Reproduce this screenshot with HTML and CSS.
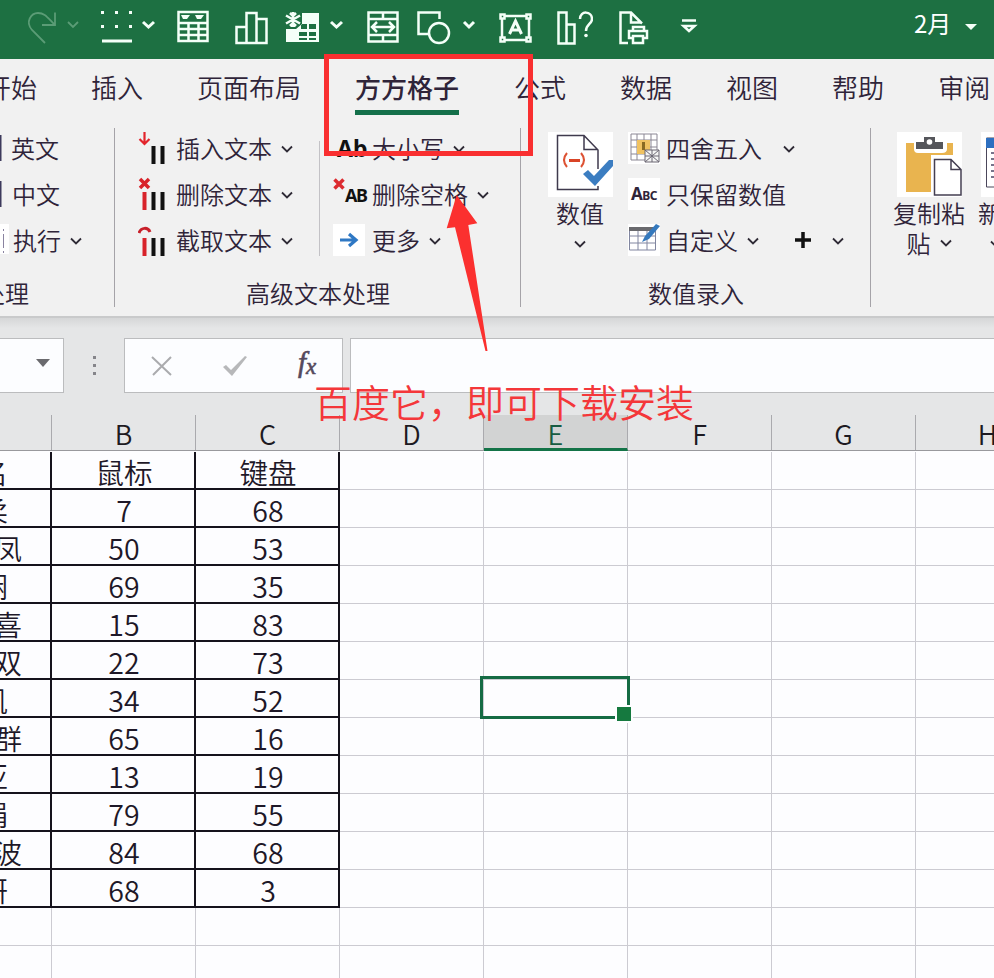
FILE: index.html
```html
<!DOCTYPE html>
<html lang="zh-CN">
<head>
  <meta charset="UTF-8">
  <meta name="viewport" content="width=device-width, initial-scale=1.0">
  <title>2月</title>
  <link rel="stylesheet" href="styles.css">
</head>
<body>
  <svg class="defs">
    <symbol id="chev" viewBox="0 0 12 8"><path d="M1 1.5l5 5 5-5" fill="none" stroke="currentColor" stroke-width="1.8"/></symbol>
  </svg>

  <header class="titlebar">
    <!-- redo -->
    <svg class="dim" width="36" height="40"><path d="M21 35L8 22C1 14 7 5 14 5C21 5 23 9 31 17M31 4.500V17H18"/></svg>
    <svg class="dim" width="16" height="34"><path d="M3 14l5 5 5-5"/></svg>
    <!-- border -->
    <svg width="36" height="40"><path class="solid" d="M3 3h3v3H3zM17 3h3v3h-3zM31 3h3v3h-3zM3 17h3v3H3zM17 17h3v3h-3zM31 17h3v3h-3zM4 31.500h30v3H4z"/></svg>
    <svg width="18" height="34"><path class="bold" d="M3 14l5.500 5 5.500-5"/></svg>
    <!-- table -->
    <svg width="36" height="40"><path d="M3.500 4h29v29h-29zM3.500 15h29M3.500 21h29M3.500 27h29M13.500 15v18M23.500 15v18"/><path class="solid" d="M6 7h9l-3 4h-4zM20 7h9l-3 4h-4z"/></svg>
    <!-- chart -->
    <svg width="38" height="40"><path d="M3.500 19h10v16h-10zM13.500 5h10v30h-10zM23.500 11h10v24h-10z"/></svg>
    <!-- freeze panes -->
    <svg width="38" height="40"><path class="solid" fill-rule="evenodd" d="M19 5h17v29H3V21h10l6-5zM18 16v5h6v-5zM26 16v5h7v-5zM16 24v4h8v-4zM26 24v4h7v-4zM26 30v2h7v-2zM16 30v2h8v-2z"/><path d="M10 4v15M3 7.500l14 8M3 15.500l14-8M7 5l3 3 3-3M7 18l3-3 3 3"/></svg>
    <svg width="18" height="34"><path class="bold" d="M3 14l5.500 5 5.500-5"/></svg>
    <!-- merge -->
    <svg width="36" height="40"><path d="M3.500 4.500h29v29h-29zM3.500 11h29M3.500 27h29M18 4.500v6.500M18 27v6.500M7 19h22M12 14l-5 5 5 5M24 14l5 5-5 5"/></svg>
    <!-- shapes -->
    <svg width="38" height="40"><path d="M13 26H3.500V4.500H24.500V11"/><circle cx="24" cy="25" r="10"/></svg>
    <svg width="18" height="34"><path class="bold" d="M3 14l5 5 5-5"/></svg>
    <!-- text box -->
    <svg width="36" height="40"><path d="M5 8h27v24H5z"/><path class="knock" d="M3.500 6.500h4v4h-4zM29.500 6.500h4v4h-4zM3.500 29.500h4v4h-4zM29.500 29.500h4v4h-4z"/><path class="bold" d="M12.500 26l6-13 6 13M15 22h8"/></svg>
    <!-- chart help -->
    <svg width="38" height="40"><path d="M3.500 4.500h8v31h-8zM11.500 16.500h8v19h-8z"/><path d="M25 11c0-9 12-8 12 0c0 5-6 5-6 12"/><circle class="solid" cx="31" cy="27.500" r="1.800"/></svg>
    <!-- print preview -->
    <svg width="36" height="40"><path d="M11 35H3.500V4.500H14L25 15.500M14 4.500V14.500H24"/><path d="M16 23v-4h11v4M16 30h-4v-7h18v7h-4M16 28h10v7H16z"/></svg>
    <svg width="20" height="40"><path d="M3 12.500h14"/><path d="M4.500 18h11l-5.500 5z"/></svg>
    <span class="doc-name">2月</span>
    <svg width="16" height="40"><path class="solid" d="M2 16h12l-6 6z"/></svg>
  </header>

  <nav class="tabs">
    <span>开始</span><span>插入</span><span>页面布局</span><span class="active">方方格子</span><span>公式</span><span>数据</span><span>视图</span><span>帮助</span><span>审阅</span>
  </nav>

  <section class="ribbon">
    <div class="group group-lang">
      <div class="rows">
        <div class="item"><svg class="ico" width="11" height="32"><path d="M.5 3v26" stroke="#3d3a5c" stroke-width="2"/></svg>英文</div>
        <div class="item"><svg class="ico" width="12" height="32"><path d="M.5 3v26" stroke="#3d3a5c" stroke-width="2"/></svg>中文</div>
        <div class="item"><svg class="ico" width="13" height="32"><path d="M0 0h9v30H0z" fill="#fff"/><path d="M3.500 5v24" stroke="#8a83a0" stroke-dasharray="2 3 14 3"/></svg>执行<svg class="chev"><use href="#chev"/></svg></div>
      </div>
      <div class="caption">处理</div>
    </div>

    <div class="group group-text">
      <div class="columns">
        <div class="rows">
          <div class="item"><svg class="ico" width="38" height="40"><path d="M6.500 4v12M1.500 11l5 5 5-5" fill="none" stroke="#e3252c" stroke-width="2.200"/><path d="M13.500 18h4v18h-4zM22.500 18h4v18h-4z" fill="#111"/></svg>插入文本<svg class="chev"><use href="#chev"/></svg></div>
          <div class="item"><svg class="ico" width="38" height="40"><path d="M2 5l9 9M11 5l-9 9" stroke="#d8232a" stroke-width="3.500"/><path d="M4.500 18h4v18h-4z" fill="#d8232a"/><path d="M13.500 18h4v18h-4zM22.500 18h4v18h-4z" fill="#111"/></svg>删除文本<svg class="chev"><use href="#chev"/></svg></div>
          <div class="item"><svg class="ico" width="38" height="40"><path d="M1 13c2-6 9-6 11-1" fill="none" stroke="#c8202a" stroke-width="3"/><path d="M4.500 18h4v18h-4z" fill="#d8232a"/><path d="M13.500 18h4v18h-4zM22.500 18h4v18h-4z" fill="#111"/></svg>截取文本<svg class="chev"><use href="#chev"/></svg></div>
        </div>
        <div class="rows second">
          <div class="item"><span class="ab case">Ab</span>大小写<svg class="chev"><use href="#chev"/></svg></div>
          <div class="item"><span class="ab trim"><svg width="12" height="12"><path d="M1.500 1.500l9 9M10.500 1.500l-9 9" stroke="#dc2b2f" stroke-width="3.500"/></svg>AB</span>删除空格<svg class="chev"><use href="#chev"/></svg></div>
          <div class="item"><svg class="ico tile" width="32" height="32"><path d="M7 16h16M16 10l7 6-7 6" fill="none" stroke="#2f78c4" stroke-width="3.200"/></svg>更多<svg class="chev"><use href="#chev"/></svg></div>
        </div>
      </div>
      <div class="caption">高级文本处理</div>
    </div>

    <div class="group group-number">
      <div class="columns">
        <div class="big">
          <svg class="tile" width="65" height="65"><path d="M50 54V57.500H9.500V3.500H36L50 18V37M36 3.500V17.500H50" fill="none" stroke="#3f3a4d" stroke-width="1.500"/><path d="M19 21q-6 7 0 14M33 21q6 7 0 14" fill="none" stroke="#dd5233" stroke-width="2"/><path d="M21 28.500h11" stroke="#d94426" stroke-width="3"/><path d="M35 42l5-4 6 6 15-16h4v6L47 54z" fill="#3b7dc1"/></svg>
          <span>数值</span>
          <svg class="chev"><use href="#chev"/></svg>
        </div>
        <div class="rows">
          <div class="item"><svg class="ico tile" width="32" height="32"><path d="M3 2h26v26H3zM3 8h26M3 15h26M3 22h26M9 2v26M16 2v6M23 2v26" fill="none" stroke="#8b8794"/><path d="M9 8h13v14H9z" fill="#f0c261"/><path d="M14 10h3v8h-3z" fill="#8a6a22"/><path d="M17 18h14v12H17zM17 18l14 12M31 18L17 30M17 24h14M24 18v12" fill="#f4f4f4" stroke="#6b6672"/></svg>四舍五入<svg class="chev far"><use href="#chev"/></svg></div>
          <div class="item"><span class="ico tile asc">A<small>BC</small></span>只保留数值</div>
          <div class="item"><svg class="ico tile" width="32" height="32"><path d="M1.500 5h26v21h-26zM1.500 12h26M1.500 19h26M10 5v21M19 5v21" fill="none" stroke="#8186a0"/><path d="M1 3h25v4H1z" fill="#6a6a6e"/><path d="M14 18l3-6L28 0l4 2-11 13z" fill="#3579bd"/></svg>自定义<svg class="chev"><use href="#chev"/></svg><svg class="plus" width="16" height="16"><path d="M8 0v16M0 8h16" stroke="#111" stroke-width="3.500"/></svg><svg class="chev far"><use href="#chev"/></svg></div>
        </div>
      </div>
      <div class="caption">数值录入</div>
    </div>

    <div class="group group-paste">
      <div class="columns">
        <div class="big paste">
          <svg class="tile" width="65" height="65"><path d="M9 11h8v6q0 4 4 4h24q5 0 5-4v-6h6v12H34v37H9z" fill="#e9b44f"/><path d="M19 10h8V5h11v5h8v7H19z" fill="#55565b"/><circle cx="32.500" cy="10" r="2.800" fill="#fff"/><path d="M37.500 27.500H54l10 10V63H37.500zM54 27.500v10h10" fill="#fff" stroke="#443f52" stroke-width="1.500"/></svg>
          <span>复制粘</span>
          <span class="line2">贴<svg class="chev"><use href="#chev"/></svg></span>
        </div>
        <div class="big next">
          <svg class="tile" width="65" height="65"><path d="M5.500 6h40v49h-40z" fill="#fff" stroke="#4a465a"/><path d="M5 6h41v10H5z" fill="#2d6fc0"/><path d="M10 21h30M10 27h30M10 33h30M10 39h30M10 45h30" stroke="#77738a" stroke-width="2" stroke-dasharray="3 3"/></svg>
          <span>新</span>
          <svg class="chev"><use href="#chev"/></svg>
        </div>
      </div>
    </div>
  </section>

  <section class="formula-bar">
    <div class="name-box"><svg width="14" height="9"><path d="M0 0h14L7 8z" fill="#6a6a6e"/></svg></div>
    <div class="dots"><i></i><i></i><i></i></div>
    <div class="fx-box">
      <svg width="22" height="22"><path d="M1 2l19 18M20 2L2 20" fill="none" stroke="#aaabae" stroke-width="2"/></svg>
      <svg width="26" height="22"><path d="M1 12l3-2 5 5L23 1l2 1L10 21z" fill="#b7b8ba"/></svg>
      <span class="fx">f<sub>x</sub></span>
    </div>
    <div class="input-box"></div>
  </section>

  <div class="col-heads">
    <span></span><span>B</span><span>C</span><span>D</span><span class="current">E</span><span>F</span><span>G</span><span>H</span>
  </div>

  <main class="sheet" id="sheet"></main>

  <!-- annotations -->
  <div class="mark-box"></div>
  <svg class="mark-arrow" width="48" height="165"><path d="M14.700 5L35.300 33.300L26.300 35L45.500 161L43.500 161L13 37.300L4.700 38.300z" fill="#fb302f"/></svg>
  <div class="mark-text">百度它，即可下载安装</div>

  <script src="sheet.js"></script>
</body>
</html>
```
FILE: styles.css
```css
:root {
  --green: #1d7042;
  --ribbon: #f1f1f1;
  --ink: #2f2439;
  --red: #f92f30;
}

* {
  margin: 0;
  padding: 0;
  box-sizing: border-box;
}

html {
  overflow: hidden;
}

body {
  width: 994px;
  height: 978px;
  overflow: hidden;
  position: relative;
  background: #fdfdff;
  color: var(--ink);
  font-family: "Noto Sans CJK SC", sans-serif;
  font-weight: 350;
}

svg {
  display: block;
  flex: none;
}

.defs {
  display: none;
}

/* quick access toolbar */
.titlebar {
  height: 59px;
  padding: 8px 0 0 24px;
  background: var(--green);
  display: grid;
  grid-template-columns: 41px 33px 42px 35px 58px 50px 45px 37px 50px 46px 36px 58px 62px 62px 233px 51px 16px;
  align-items: start;
}

.titlebar path,
.titlebar circle {
  fill: none;
  stroke: #f4fff8;
  stroke-width: 2.5;
}

.titlebar .bold {
  stroke-width: 3;
}

.titlebar .solid {
  fill: #f4fff8;
  stroke: none;
}

.titlebar .knock {
  fill: var(--green);
}

.titlebar .dim path {
  stroke: #5b9c76;
  stroke-width: 1.8;
}

.doc-name {
  color: #fff;
  font-size: 24px;
  line-height: 30px;
  font-weight: 400;
  padding-left: 2px;
}

/* tabs */
.tabs {
  height: 67px;
  background: var(--ribbon);
  display: flex;
  gap: 54px;
  margin-left: -15px;
  width: 1040px;
  font-size: 26px;
  line-height: 36px;
  padding-top: 10px;
  white-space: nowrap;
}

.tabs span {
  height: 46px;
}

.tabs .active {
  font-weight: 500;
  border-bottom: 5px solid #14704a;
  margin-right: 1px;
}

/* ribbon */
.ribbon {
  height: 192px;
  background: var(--ribbon);
  border-bottom: 2px solid #c9cacb;
  display: flex;
  font-size: 24px;
  overflow: hidden;
}

.group {
  flex: none;
  height: 182px;
  display: flex;
  flex-direction: column;
  justify-content: space-between;
  background: linear-gradient(#a5a3a8, #a5a3a8) right 0 top 2px / 1px 179px no-repeat;
}

.group-lang {
  width: 115px;
}

.group-text {
  width: 406px;
}

.group-number {
  width: 350px;
}

.group-paste {
  width: 160px;
  background: none;
}

.columns {
  display: flex;
}

.item {
  height: 46px;
  padding-bottom: 4px;
  display: flex;
  align-items: center;
  white-space: nowrap;
}

.item .ico,
.item .ab {
  margin-top: 2px;
}

.item .chev {
  margin-top: 4px;
}

.caption {
  line-height: 26px;
  height: 28px;
  text-align: center;
}

.group-lang .caption {
  text-align: left;
  margin-left: -19px;
}

.chev {
  width: 12px;
  height: 8px;
  margin-left: 9px;
  color: #2f2b36;
}

.chev.far {
  margin-left: 21px;
}

.tile {
  background: #fff;
}

.group-text .rows:first-child {
  width: 205px;
  padding-left: 23px;
  background: linear-gradient(#c3c2c6, #c3c2c6) right 0 top 15px / 1px 115px no-repeat;
}

.second {
  padding-left: 13px;
}

.second .tile {
  margin-right: 7px;
}

.ab {
  width: 39px;
  height: 32px;
  color: #111;
  font-family: "Noto Sans", sans-serif;
  font-weight: 700;
  display: flex;
}

.case {
  font-size: 23px;
  line-height: 32px;
  padding-left: 4px;
}

.trim {
  font-size: 18px;
  line-height: 34px;
  letter-spacing: -1.500px;
}

.group-number .big {
  margin: 6px 16px 0 27px;
}

.group-number .tile.ico {
  margin-right: 6px;
}

.asc {
  width: 32px;
  height: 32px;
  font: 700 17px/32px "Noto Sans", sans-serif;
  text-align: center;
  letter-spacing: -.500px;
}

.asc small {
  font-size: 12px;
}

.plus {
  margin: 2px 0 0 36px;
}

.big {
  width: 64px;
  display: flex;
  flex-direction: column;
  align-items: center;
  line-height: 30px;
}

.big > span {
  margin-top: 1px;
  white-space: nowrap;
}

.big > .chev {
  margin: 12px 0 0;
}

.paste {
  width: 72px;
  margin: 6px 0 0 22px;
}

.big .line2 {
  display: flex;
  align-items: center;
  margin-top: 0;
}

.next {
  align-items: flex-start;
  margin: 6px 0 0 13px;
}

.next .tile {
  margin-left: 3px;
}

.next .chev {
  margin-left: 12px;
}

/* formula bar */
.formula-bar {
  height: 97px;
  padding-top: 20px;
  background: linear-gradient(#d6d7d8, #e5e6e7 10px);
  display: flex;
}

.formula-bar > div {
  height: 55px;
}

.name-box,
.fx-box,
.input-box {
  background: #fcfdff;
  border: 1px solid #bbbcbe;
}

.name-box {
  width: 64px;
  border-left: 0;
  display: flex;
  align-items: center;
  justify-content: flex-end;
  padding: 0 13px 4px 0;
}

.dots {
  width: 60px;
  display: flex;
  flex-direction: column;
  align-items: center;
  justify-content: center;
  gap: 5px;
}

.dots i {
  width: 3px;
  height: 3px;
  background: #85858a;
}

.fx-box {
  width: 219px;
  display: flex;
  align-items: center;
  padding-left: 26px;
}

.fx-box svg + svg {
  margin-left: 49px;
}

.fx {
  font: italic 400 29px/40px "Liberation Serif", serif;
  -webkit-text-stroke: .6px #55495d;
  margin: -3px 0 0 50px;
  color: #55495d;
}

.fx sub {
  font-size: 23px;
  vertical-align: -2px;
}

.input-box {
  flex: 1;
  margin-left: 7px;
  border-right: 0;
}

/* sheet */
.col-heads {
  height: 36px;
  width: 1152px;
  margin-left: -92px;
  display: grid;
  grid-template-columns: repeat(8, 144px);
  background: #e5e6e7;
  border-bottom: 1px solid #99999d;
  color: #1d1a22;
  font-size: 27px;
  line-height: 38px;
  text-align: center;
}

.col-heads span {
  border-right: 1px solid #aaaaae;
  height: 35px;
}

.col-heads .current {
  height: 36px;
  background: #d2d3d3;
  border-bottom: 3px solid #137347;
  color: #175c42;
}

.sheet {
  width: 1152px;
  margin-left: -92px;
  padding-top: 1px;
  display: grid;
  grid-template-columns: repeat(8, 144px);
  grid-auto-rows: 38px;
}

.cell {
  border-right: 1px solid #cccbd2;
  border-bottom: 1px solid #cccbd2;
  font-size: 28.500px;
  line-height: 40px;
  text-align: center;
  position: relative;
}

.cell.data {
  border-right: 2px solid #15121c;
  border-bottom: 2px solid #15121c;
  padding-left: 2px;
  color: #1e1828;
}

.cell.name {
  text-align: right;
  padding-right: 28px;
}

.cell.name.short {
  padding-right: 42px;
}

.selection {
  position: absolute;
  z-index: 1;
  inset: -4px -3px -2px -4px;
  border: 3px solid #156b44;
}

.selection::after {
  content: "";
  position: absolute;
  right: -6px;
  bottom: -7px;
  width: 14px;
  height: 14px;
  background: #15793f;
  border: 2px solid #fdfdff;
}

/* annotations */
.mark-box {
  position: absolute;
  left: 324px;
  top: 54px;
  width: 209px;
  height: 102px;
  border: 5px solid var(--red);
}

.mark-arrow {
  position: absolute;
  left: 442px;
  top: 190px;
}

.mark-text {
  position: absolute;
  left: 314px;
  top: 373px;
  font-size: 38px;
  line-height: 56px;
  color: #f4373a;
  white-space: nowrap;
}
```
FILE: sheet.js
```javascript
const rows = [
  ['名', '鼠标', '键盘'],
  ['柔', 7, 68],
  ['凤', 50, 53],
  ['娴', 69, 35],
  ['喜', 15, 83],
  ['双', 22, 73],
  ['凯', 34, 52],
  ['群', 65, 16],
  ['亚', 13, 19],
  ['娟', 79, 55],
  ['波', 84, 68],
  ['妍', 68, 3]
];
const shortRows = [0, 1, 3, 6, 8, 9, 11];

const sheet = document.getElementById('sheet');
for (let r = 0; r < 14; r++) {
  for (let c = 0; c < 8; c++) {
    const cell = document.createElement('div');
    cell.className = 'cell';
    if (rows[r] && c < 3) {
      cell.classList.add('data');
      cell.textContent = rows[r][c];
      if (c === 0) cell.classList.add('name');
      if (c === 0 && shortRows.includes(r)) cell.classList.add('short');
    }
    if (r === 6 && c === 4) {
      cell.innerHTML = '<div class="selection"></div>';
    }
    sheet.appendChild(cell);
  }
}
```
